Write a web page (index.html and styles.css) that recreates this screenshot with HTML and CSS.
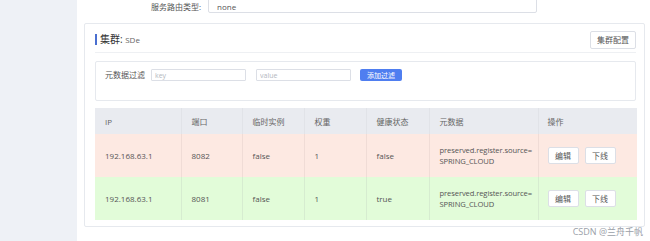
FILE: index.html
```html
<!DOCTYPE html>
<html lang="zh-CN">
<head>
    <meta charset="UTF-8">
    <title>服务详情</title>
    <link rel="stylesheet" href="styles.css">
</head>
<body>
    <div class="sidebar"></div>
    <div class="main">
        <div class="route-row">
            <label>服务路由类型:</label>
            <input class="route-input" type="text" value="none">
        </div>

        <div class="card">
            <div class="card-header">
                <div class="card-title">集群: <span class="cluster-name">SDe</span></div>
                <button class="btn">集群配置</button>
            </div>

            <div class="filter-panel">
                <span class="filter-label">元数据过滤</span>
                <input class="filter-input" type="text" placeholder="key">
                <input class="filter-input" type="text" placeholder="value">
                <button class="btn-primary">添加过滤</button>
            </div>

            <table class="instance-table">
                <thead>
                    <tr>
                        <th class="col-ip">IP</th>
                        <th class="col-port">端口</th>
                        <th class="col-eph">临时实例</th>
                        <th class="col-weight">权重</th>
                        <th class="col-health">健康状态</th>
                        <th class="col-meta">元数据</th>
                        <th>操作</th>
                    </tr>
                </thead>
                <tbody>
                    <tr class="row-down">
                        <td>192.168.63.1</td>
                        <td>8082</td>
                        <td>false</td>
                        <td>1</td>
                        <td>false</td>
                        <td class="meta">preserved.register.source=<br>SPRING_CLOUD</td>
                        <td><button class="btn btn-small">编辑</button><button class="btn btn-small">下线</button></td>
                    </tr>
                    <tr class="row-up">
                        <td>192.168.63.1</td>
                        <td>8081</td>
                        <td>false</td>
                        <td>1</td>
                        <td>true</td>
                        <td class="meta">preserved.register.source=<br>SPRING_CLOUD</td>
                        <td><button class="btn btn-small">编辑</button><button class="btn btn-small">下线</button></td>
                    </tr>
                </tbody>
            </table>
        </div>
        <div class="watermark">CSDN @兰舟千帆</div>
    </div>
</body>
</html>
```

FILE: styles.css
```css
body {
    margin: 0;
    display: flex;
    height: 241px;
    overflow: hidden;
    background: #fff;
    font-family: "Open Sans", "Noto Sans CJK SC", sans-serif;
    color: #555;
}

.sidebar {
    width: 77px;
    flex-shrink: 0;
    background: #eef1f6;
}

.main {
    flex: 1;
    padding-left: 7px;
    position: relative;
}

.route-row {
    display: flex;
    align-items: center;
    margin-top: -8px;
    height: 21px;
}

.route-row label {
    width: 117px;
    text-align: right;
    font-size: 8px;
    color: #555;
    padding-right: 7px;
    padding-top: 8px;
}

.route-input {
    box-sizing: border-box;
    width: 329px;
    height: 21px;
    border: 1px solid #dcdfe6;
    border-radius: 2px;
    padding: 8px 8px 0;
    font-family: inherit;
    font-size: 8px;
    color: #555;
}

.card {
    box-sizing: border-box;
    width: 561px;
    height: 204px;
    margin-top: 10px;
    border: 1px solid #e6e9ee;
    border-radius: 2px;
    padding: 0 8px 0 10px;
}

.card-header {
    display: flex;
    justify-content: space-between;
    align-items: center;
    height: 28px;
    border-bottom: 1px solid #eef0f3;
}

.card-title {
    border-left: 2px solid #4a6fd0;
    padding-left: 3px;
    font-size: 10px;
    line-height: 11px;
    color: #333;
    margin-top: 2px;
}

.cluster-name {
    font-size: 8px;
    color: #666;
}

.btn {
    background: #fff;
    border: 1px solid #dcdfe6;
    border-radius: 2px;
    font-family: inherit;
    font-size: 8px;
    color: #555;
    height: 18px;
    padding: 0 6px;
    margin-top: 3px;
}

.filter-panel {
    box-sizing: border-box;
    height: 40px;
    margin-top: 8px;
    border: 1px solid #e6e9ee;
    border-radius: 2px;
    display: flex;
    align-items: flex-start;
    padding: 7px 0 0 9px;
}

.filter-label {
    font-size: 8px;
    color: #555;
    line-height: 12px;
    margin-right: 6px;
}

.filter-input {
    box-sizing: border-box;
    width: 95px;
    height: 12px;
    border: 1px solid #dcdfe6;
    border-radius: 1px;
    padding: 0 3px;
    font-family: inherit;
    font-size: 7px;
    margin-right: 10px;
}

.filter-input::placeholder {
    color: #b4b8c0;
}

.btn-primary {
    height: 12px;
    width: 42px;
    padding: 0;
    border: none;
    border-radius: 2px;
    background: #4f7ef0;
    color: #fff;
    font-family: inherit;
    font-size: 7px;
    margin-left: -1px;
}

.instance-table {
    width: 542px;
    margin-top: 7px;
    border-collapse: collapse;
    table-layout: fixed;
    font-size: 8px;
}

.instance-table th,
.instance-table td {
    box-sizing: border-box;
    padding: 0 10px;
    text-align: left;
}

.instance-table th {
    background: #e9ebf0;
    height: 26px;
    font-weight: normal;
    color: #666;
    border-right: 1px solid #e1e3e8;
}

.instance-table td {
    height: 43px;
    border-right: 1px solid #f0dcd6;
    line-height: 11px;
    white-space: nowrap;
}

.instance-table td.meta {
    font-size: 7.6px;
    letter-spacing: -0.1px;
}

.instance-table th:last-child,
.instance-table td:last-child {
    border-right: none;
    padding-left: 9px;
}

.col-ip { width: 86px; }
.col-port { width: 61px; }
.col-eph { width: 62px; }
.col-weight { width: 62px; }
.col-health { width: 63px; }
.col-meta { width: 109px; }

.row-down td {
    background: #fde9e2;
}

.row-up td {
    background: #e2fcd9;
    border-right-color: #d6ecd0;
}

.btn-small {
    width: 31px;
    height: 17px;
    padding: 0;
    margin: 0 6px 0 0;
}

.watermark {
    position: absolute;
    right: 7px;
    bottom: 3px;
    font-size: 9px;
    color: #9aa0a8;
}
```
